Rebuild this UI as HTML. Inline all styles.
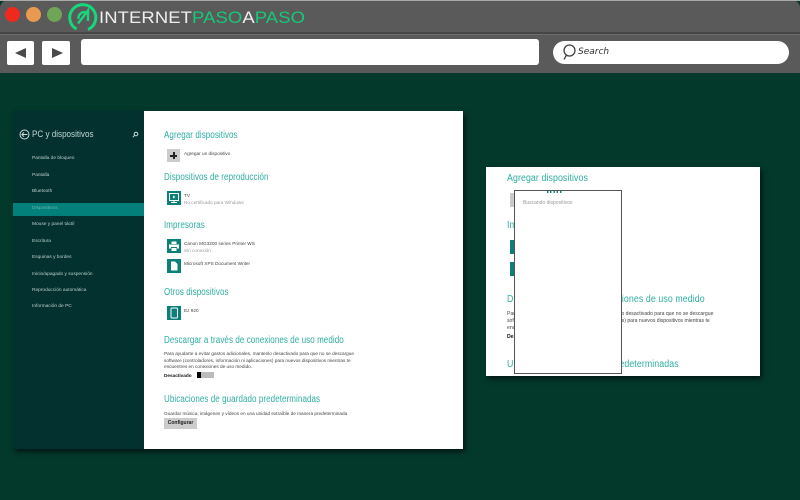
<!DOCTYPE html>
<html lang="es"><head><meta charset="utf-8"><title>PC y dispositivos</title>
<style>
html,body{margin:0;padding:0}
body{width:800px;height:500px;position:relative;overflow:hidden;background:#03392b;font-family:"Liberation Sans",sans-serif}
.a{position:absolute;white-space:nowrap}
.h{position:absolute;white-space:nowrap;color:#2eaea1;font-size:10px;line-height:12px;letter-spacing:.1px;transform-origin:0 0;transform:scaleX(.8);filter:blur(.2px)}
.h.r{transform:scaleX(.88)}
.t{position:absolute;white-space:nowrap;color:#444;font-size:4.7px;line-height:7px;filter:blur(.2px)}
.t.r{font-size:5.1px}
.g{color:#999}
.n{position:absolute;left:32px;white-space:nowrap;color:#b9cfcc;font-size:4.8px;line-height:8px;filter:blur(.15px)}
.ic{position:absolute;left:167px;width:14px;height:14px;background:#0b7f78}
</style></head><body>
<div class="a" style="left:0;top:0;width:800px;height:73px;background:#5a5a5a;border-radius:8px 8px 0 0"></div>
<div class="a" style="left:0;top:0;width:800px;height:1px;background:#aaa"></div>
<div class="a" style="left:0;top:32px;width:800px;height:2px;background:#464646"></div>
<div class="a" style="left:0;top:34px;width:800px;height:1px;background:#6c6c6c"></div>
<div class="a" style="left:5px;top:7px;width:15px;height:15px;border-radius:50%;background:#f0291f"></div>
<div class="a" style="left:26px;top:7px;width:15px;height:15px;border-radius:50%;background:#e89a50"></div>
<div class="a" style="left:47px;top:7px;width:15px;height:15px;border-radius:50%;background:#6fa556"></div>
<svg class="a" style="left:67px;top:2px" width="31" height="30" viewBox="0 0 31 30" fill="none" stroke="#16d77c"><path d="M9.500 27A13 13 0 1 1 21 27.500" stroke-width="3"/><path d="M11 21.500L21 8.500V19M19.500 10.500A6 6 0 0 0 11.500 17" stroke-width="2.400"/></svg>
<div class="a" style="left:99px;top:8px;font-size:16.500px;line-height:20px;color:#eee;letter-spacing:.1px;transform-origin:0 0;transform:scaleX(1.117)">INTERNET<span style="color:#16c877">PASO</span>A<span style="color:#16c877">PASO</span></div>
<div class="a" style="left:7px;top:41px;width:27px;height:24px;background:#fff;border-radius:2px"></div>
<div class="a" style="left:42px;top:41px;width:28px;height:24px;background:#fff;border-radius:2px"></div>
<svg class="a" style="left:7px;top:41px" width="63" height="24"><path d="M8 12L19 7V17Z" fill="#4a4a4a"/><path d="M45 7L56 12L45 17Z" fill="#4a4a4a"/></svg>
<div class="a" style="left:81px;top:39px;width:458px;height:26px;background:#fff;border-radius:3px"></div>
<div class="a" style="left:553px;top:41px;width:236px;height:23px;background:#fff;border-radius:12px"></div>
<svg class="a" style="left:561px;top:44px" width="18" height="18" fill="none" stroke="#444" stroke-width="1.300"><circle cx="8.500" cy="6.500" r="5.500"/><path d="M5.500 11L3 15.500"/></svg>
<div class="a" style="left:578px;top:46px;font-family:'DejaVu Sans',sans-serif;font-style:italic;font-size:9px;line-height:12px;color:#333">Search</div>

<div class="a" style="left:13px;top:111px;width:450px;height:338px;box-shadow:2px 3px 5px rgba(0,0,0,.6)"></div>
<div class="a" style="left:13px;top:111px;width:131px;height:338px;background:#03312f"></div>
<div class="a" style="left:144px;top:111px;width:319px;height:338px;background:#fff"></div>
<svg class="a" style="left:19px;top:129px" width="11" height="11" fill="none" stroke="#ccdad8"><circle cx="5.500" cy="5.500" r="4.500"/><path d="M8.500 5.500H3M5 3.300L2.800 5.500L5 7.700"/></svg>
<div class="a" style="left:32px;top:129px;color:#c4d6d3;font-size:9.500px;line-height:12px;transform-origin:0 0;transform:scaleX(.85);filter:blur(.15px)">PC y dispositivos</div>
<svg class="a" style="left:132px;top:131px" width="7" height="7" fill="none" stroke="#ccdad8"><circle cx="4" cy="3" r="1.800"/><path d="M2.700 4.300L.8 6.200"/></svg>
<div class="n" style="top:155px">Pantalla de bloqueo</div>
<div class="n" style="top:172px">Pantalla</div>
<div class="n" style="top:188px">Bluetooth</div>
<div class="a" style="left:13px;top:203px;width:131px;height:13px;background:#04807a"></div>
<div class="n" style="top:205px;color:#5fb8b0">Dispositivos</div>
<div class="n" style="top:221px">Mouse y panel táctil</div>
<div class="n" style="top:237.500px">Escritura</div>
<div class="n" style="top:254px">Esquinas y bordes</div>
<div class="n" style="top:270.500px">Inicio/apagado y suspensión</div>
<div class="n" style="top:287px">Reproducción automática</div>
<div class="n" style="top:303px">Información de PC</div>

<div class="h" style="left:164px;top:130px">Agregar dispositivos</div>
<div class="a" style="left:167px;top:149px;width:13px;height:13px;background:#ccc"></div>
<div class="a" style="left:170px;top:155px;width:7px;height:1.500px;background:#222"></div>
<div class="a" style="left:173px;top:152px;width:1.500px;height:7px;background:#222"></div>
<div class="t" style="left:184px;top:150px">Agregar un dispositivo</div>
<div class="h" style="left:164px;top:172px">Dispositivos de reproducción</div>
<div class="ic" style="top:191px"></div>
<svg class="a" style="left:167px;top:191px" width="14" height="14" fill="none" stroke="#fff"><rect x="2.500" y="2.500" width="9" height="7"/><path d="M4 11.500H10M7 10V11.500"/><path d="M6 4.500L8.500 6L6 7.500Z" fill="#fff" stroke="none"/></svg>
<div class="t" style="left:184px;top:192px">TV</div>
<div class="t g" style="left:184px;top:199px">No certificado para Windows</div>
<div class="h" style="left:164px;top:220px">Impresoras</div>
<div class="ic" style="top:239px"></div>
<svg class="a" style="left:167px;top:239px" width="14" height="14" fill="#fff"><path d="M4.500 2.500H9.500V5H4.500ZM2 5.500H12V9.500H10V8H4V9.500H2ZM4.500 9H9.500V12H4.500Z"/></svg>
<div class="t" style="left:184px;top:240px">Canon MG3200 series Printer WS</div>
<div class="t g" style="left:184px;top:247px">Sin conexión</div>
<div class="ic" style="top:259px"></div>
<svg class="a" style="left:167px;top:259px" width="14" height="14" fill="#fff"><path d="M4 2.500H8L10.500 5V11.500H4Z"/></svg>
<div class="t" style="left:184px;top:260px">Microsoft XPS Document Writer</div>
<div class="h" style="left:164px;top:287px">Otros dispositivos</div>
<div class="ic" style="top:306px"></div>
<svg class="a" style="left:167px;top:306px" width="14" height="14" fill="none" stroke="#fff"><rect x="4" y="2" width="6.500" height="10" rx="1"/></svg>
<div class="t" style="left:184px;top:307px">Ez 920</div>
<div class="h" style="left:164px;top:335px">Descargar a través de conexiones de uso medido</div>
<div class="t" style="left:164px;top:351px;line-height:6.500px">Para ayudarte a evitar gastos adicionales, mantenlo desactivado para que no se descargue<br>software (controladores, información ni aplicaciones) para nuevos dispositivos mientras te<br>encuentres en conexiones de uso medido.</div>
<div class="t" style="left:164px;top:372px;color:#111;font-weight:bold">Desactivado</div>
<div class="a" style="left:197px;top:372px;width:17px;height:6px;background:#bbb"></div>
<div class="a" style="left:197px;top:372px;width:4px;height:6px;background:#000"></div>
<div class="h" style="left:164px;top:394px">Ubicaciones de guardado predeterminadas</div>
<div class="t" style="left:164px;top:410px">Guardar música, imágenes y vídeos en una unidad extraíble de manera predeterminada</div>
<div class="a" style="left:164px;top:418px;width:33px;height:10.500px;background:#ccc;color:#222;font-size:5px;font-weight:bold;line-height:10.500px;text-align:center">Configurar</div>

<div class="a" style="left:486px;top:167px;width:274px;height:209px;background:#fff;box-shadow:2px 3px 5px rgba(0,0,0,.6)"></div>
<div class="h r" style="left:507px;top:173px">Agregar dispositivos</div>
<div class="a" style="left:510px;top:193px;width:6px;height:14px;background:#ccc"></div>
<div class="h r" style="left:507px;top:220px">Impresoras</div>
<div class="a" style="left:510px;top:240px;width:14px;height:14px;background:#0b7f78"></div>
<div class="a" style="left:510px;top:262px;width:14px;height:14px;background:#0b7f78"></div>
<div class="h r" style="left:507px;top:294px">Descargar a través de conexiones de uso medido</div>
<div class="t r" style="left:507px;top:311px">Para ayudarte a evitar gastos adicionales, mantenlo desactivado para que no se descargue<br>software (controladores, información ni aplicaciones) para nuevos dispositivos mientras te<br>encuentres en conexiones de uso medido.</div>
<div class="t r" style="left:507px;top:333.500px;color:#111;font-weight:bold">Desactivado</div>
<div class="h r" style="left:507px;top:358.500px">Ubicaciones de guardado predeterminadas</div>
<div class="a" style="left:514px;top:189.500px;width:106px;height:182px;background:#fff;border:1px solid #555"></div>
<div class="a" style="left:547px;top:191px;width:15px;height:2px;background:repeating-linear-gradient(90deg,#1a8a80 0 1.500px,transparent 1.500px 3.200px)"></div>
<div class="t g" style="left:523px;top:200px;font-size:5px">Buscando dispositivos</div>
</body></html>
